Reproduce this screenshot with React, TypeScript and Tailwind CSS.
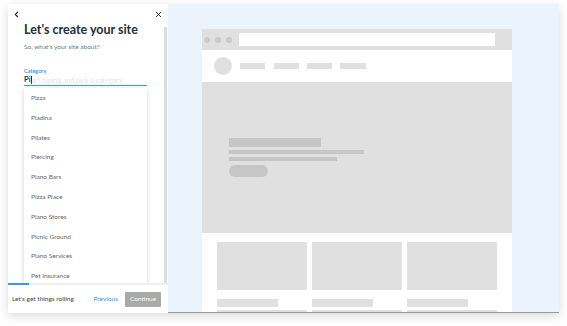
import React from 'react';
import { ChevronLeft, X } from 'lucide-react';

const categories = [
  'Pizza',
  'Piadina',
  'Pilates',
  'Piercing',
  'Piano Bars',
  'Pizza Place',
  'Piano Stores',
  'Picnic Ground',
  'Piano Services',
  'Pet Insurance',
];

function SitePreview() {
  return (
    <div className="flex-1 bg-[#ebf3fc] border-b border-[#9a9a9a] pl-[34px] pr-[47px] pt-[25px] overflow-hidden">
      <div className="w-[310px] bg-white">
        <div className="h-[21px] bg-[#e0e0e0] flex items-center pl-[2px] pr-[17px] gap-[5px]">
          <span className="w-[6px] h-[6px] rounded-full bg-[#c9c9c9]" />
          <span className="w-[6px] h-[6px] rounded-full bg-[#c9c9c9]" />
          <span className="w-[6px] h-[6px] rounded-full bg-[#c9c9c9]" />
          <div className="flex-1 h-[13px] bg-white ml-[2px]" />
        </div>
        <div className="h-[32px] flex items-center pl-[12px] gap-[8px]">
          <span className="w-[18px] h-[18px] rounded-full bg-[#e0e0e0]" />
          <span className="w-[25px] h-[6px] bg-[#e0e0e0]" />
          <span className="w-[25px] h-[6px] bg-[#e0e0e0] ml-[1px]" />
          <span className="w-[25px] h-[6px] bg-[#e0e0e0]" />
          <span className="w-[26px] h-[6px] bg-[#e0e0e0]" />
        </div>
        <div className="h-[151px] bg-[#e0e0e0] pl-[27px] pt-[56px] flex flex-col items-start">
          <div className="w-[92px] h-[9px] bg-[#c6c6c6]" />
          <div className="w-[135px] h-[4px] bg-[#c6c6c6] mt-[3px]" />
          <div className="w-[108px] h-[4px] bg-[#c6c6c6] mt-[3px]" />
          <div className="w-[39px] h-[12px] rounded-full bg-[#c6c6c6] mt-[4px]" />
        </div>
        <div className="grid grid-cols-3 gap-[5px] px-[15px] pt-[9px]">
          {[0, 1, 2].map((i) => (
            <div key={i} className="flex flex-col">
              <div className="h-[48px] bg-[#e0e0e0]" />
              <div className="w-[61px] h-[8px] bg-[#e0e0e0] mt-[9px]" />
              <div className="h-[8px] bg-[#e0e0e0] mt-[3px]" />
            </div>
          ))}
        </div>
      </div>
    </div>
  );
}

export default function App() {
  return (
    <div className="w-[567px] h-[326px] bg-white pl-[8px] pt-[4px] overflow-hidden" style={{ fontFamily: 'Lato, "Open Sans", sans-serif' }}>
      <div className="w-[551px] h-[309px] flex shadow-[0_3px_10px_rgba(0,0,0,0.15)]">
        <div className="w-[160px] flex flex-col bg-white">
          <div className="h-[19px] flex items-center justify-between pl-[4px] pr-[5px] pt-[2px]">
            <ChevronLeft className="w-[9px] h-[9px] text-[#222]" strokeWidth={3} />
            <X className="w-[9px] h-[9px] text-[#222]" strokeWidth={2.5} />
          </div>
          <div className="flex-1 flex overflow-hidden">
            <div className="flex-1 pl-[16px] pr-[17px] flex flex-col overflow-hidden">
              <h1 className="text-[12.5px] leading-[14px] font-bold text-[#20303c]">Let's create your site</h1>
              <p className="text-[6.5px] leading-[9px] text-[#6f7a82] mt-[5px]">So, what's your site about?</p>
              <label className="text-[5.5px] leading-[7px] font-bold text-[#3899ec] mt-[17px]">Category</label>
              <div className="flex items-center h-[10px] mt-[1px] border-b border-[#3899ec] pb-[1px]">
                <span className="text-[7.5px] font-bold text-[#20303c]">Pi</span>
                <span className="w-px h-[8px] bg-[#20303c]" />
                <span className="text-[7px] text-[#e0e6ea]">art typing and pick a category</span>
              </div>
              <div className="mt-[2px] bg-white shadow-[0_1px_5px_rgba(0,0,0,0.18)] rounded-[2px] flex-1">
                {categories.map((c) => (
                  <div key={c} className="h-[19.8px] flex items-center pl-[7px] text-[6.5px] text-[#666]">
                    {c}
                  </div>
                ))}
              </div>
            </div>
            <div className="w-[3px] bg-[#dcdcdc] mt-[4px] mr-[1px]" />
          </div>
          <div className="h-[2px] flex">
            <div className="w-[21px] bg-[#3899ec]" />
            <div className="flex-1 bg-[#f0f0f0]" />
          </div>
          <div className="h-[28px] flex items-center pl-[4px] pr-[7px] text-[6.5px]">
            <span className="text-[#444] flex-1">Let's get things rolling</span>
            <span className="text-[#3899ec] mr-[7px]">Previous</span>
            <span className="w-[36px] h-[15px] bg-[#a9a9a9] text-white flex items-center justify-center rounded-[1px]">Continue</span>
          </div>
        </div>
        <SitePreview />
      </div>
    </div>
  );
}
